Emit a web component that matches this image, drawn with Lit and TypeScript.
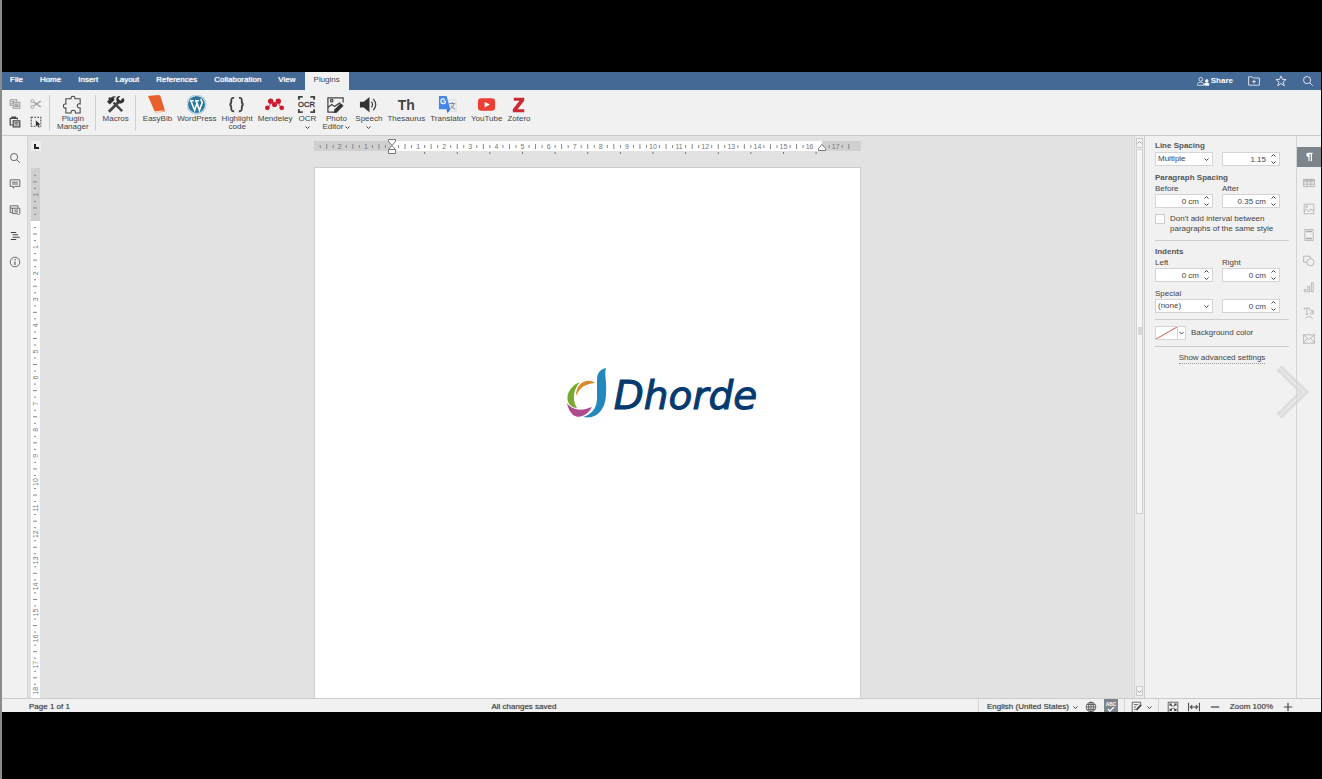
import { LitElement, html, css, svg, nothing, SVGTemplateResult } from "lit";
import { customElement, state } from "lit/decorators.js";
import { classMap } from "lit/directives/class-map.js";

const icon = (size: number, body: SVGTemplateResult, box = 20) =>
  html`<svg class="icon" width=${size} height=${size} viewBox="0 0 ${box} ${box}" aria-hidden="true">${body}</svg>`;

const chevron = html`<svg class="icon chev" width="5" height="5" viewBox="0 0 10 10" aria-hidden="true"><path d="M1 3l4 4 4-4" stroke-width="2"/></svg>`;

const I: Record<string, SVGTemplateResult> = {
  copy: svg`<path d="M2 3h11v3M2 3v9h4M4 6h5M4 9h2M7 7h11v10H7zM9 10h7M9 12h7M9 14h7" stroke-width="1.700"/>`,
  cut: svg`<circle cx="4" cy="5" r="2.500"/><circle cx="4" cy="15" r="2.500"/><path d="M6 6.500L18 15M6 13.500L18 5" stroke-width="2"/>`,
  paste: svg`<path d="M6 15H2V4h12v2M5 4V2h6v2" stroke-width="2"/><path d="M7 8h11v10H7z" fill="#fff" stroke-width="2"/><path d="M9 11h7M9 13h7M9 15h7"/>`,
  select: svg`<path d="M2 2h16v15H2z" stroke-dasharray="3 2" stroke-width="1.700"/><path d="M9 6v13l3-3 2 4 3-1-2-4h4z" fill="#333" stroke="#f1f1f1"/>`,
  puzzle: svg`<path d="M3 4h5.500c-1-3.500 5-3.500 4 0H18v5.500c-4-1.500-4 5 0 4V19h-5c1-4-5.500-4-4.500 0H3v-5.500c-3.500 1-3.500-5 0-4z" stroke-width="1.100"/>`,
  macros: svg`<path d="M3 3l4 4M8 8l9 9" stroke-width="2.500"/><path d="M3 17.500L13 7.500" stroke-width="3"/><path d="M18 3l-3 3-2-2 2-3c-3-.5-5 2-4 5s5 4 7 2 1.500-3 0-5z" fill="#333" stroke="none"/><path d="M1 7l5-5c2-1 3-1 5 0L8 3l1 2-5 5z" fill="#333" stroke="none"/>`,
  easybib: svg`<path d="M1 1l11-1q2 0 2.500 2L19 17l-8 2q-2 0-3-2z" fill="#e9602c" stroke="none"/><path d="M8 17l11-1-8 4z" fill="#fbd6c6" stroke="none"/>`,
  wordpress: svg`<circle cx="10" cy="10" r="10.500" fill="#a3c4d6" stroke="none"/><circle cx="10" cy="10" r="9.300" fill="#2b789d" stroke="#fff" stroke-width=".7"/><path d="M3 6h4M8.500 6h4M4 6l4 10 2.500-7L9.500 6M10.500 8.500L13 16l3-8c0-2-2-2-1-4" stroke="#fff" stroke-width="1.700"/>`,
  braces: svg`<path d="M7.500 3H6.500C4.500 3 4.500 4 4.500 6s0 4-2 4c2 0 2 2 2 4s0 3 2 3h1M12.500 3h1c2 0 2 1 2 3s0 4 2 4c-2 0-2 2-2 4s0 3-2 3h-1" stroke-width="2"/>`,
  mendeley: svg`<g fill="#d0182c" stroke="none"><circle cx="6" cy="6.500" r="2.800"/><circle cx="14" cy="6.500" r="2.800"/><circle cx="10" cy="10" r="2.700"/><circle cx="2.500" cy="13.500" r="2.500"/><circle cx="17.500" cy="13.500" r="2.500"/></g><path d="M3 13Q6 11 6 6l4 4 4-4q0 5 3 7" stroke="#d0182c" stroke-width="1"/>`,
  ocr: svg`<path d="M2 5V2h4M14 2h4v3M2 15v3h4M14 18h4v-3" stroke-width="2"/><text x="10" y="13" text-anchor="middle" font-size="8" fill="#333" stroke="#333" stroke-width=".3">OCR</text>`,
  photo: svg`<path d="M11 18H2V3h16v5M2 13l4-3 3 2 6-4"/><circle cx="6" cy="6" r="1.300"/><path d="M10 17l7-7" stroke-width="4" stroke="#333"/><path d="M8 19l1-4 3 3z" fill="#333" stroke="none"/>`,
  speech: svg`<path d="M1 7h4l6-5v16l-6-5H1z" fill="#333" stroke="none"/><path d="M13 7q2.500 3 0 6M15 4q5 6 0 12"/>`,
  translator: svg`<path d="M8 5h11v12h-8z" fill="#edf0f5" stroke="#ccd3de" stroke-width=".6"/><path d="M1 1h8l4 14H1z" fill="#4686e8" stroke="none"/><path d="M9 15h4l-3 4z" fill="#2f5fc0" stroke="none"/><path d="M8 6.500H5.800M8 6.500c0 4-5 3-5 0s3-3 4-1.500" stroke="#fff" stroke-width="1.200"/><path d="M12 9h6M15 7.500V9M17 9q-1 4-4 5.500M14 11q1 3 4 4" stroke="#6d7682" stroke-width=".9"/>`,
  youtube: svg`<rect x="1" y="3.500" width="18" height="13" rx="3.500" fill="#ef3e32" stroke="none"/><path d="M8 7l5.500 3L8 13z" fill="#fff" stroke="none"/>`,
  zotero: svg`<path d="M5 3h11v3l-7 9h7v3H4v-3l7-9H5z" fill="#cc2936" stroke="none"/>`,
  search: svg`<circle cx="8.500" cy="8.500" r="6"/><path d="M13 13l5 5"/>`,
  comment: svg`<path d="M2 3h16v11h-8l-3 3v-3H2zM5 7h10M5 10h10"/>`,
  chat: svg`<path d="M5 14H2V3h13v3M6 7h12v9l-2 2-2-2H6zM9 10h6M9 13h6M3 7h3"/>`,
  headings: svg`<path d="M3 4h9M6 8h9M6 12h12M3 16h9" stroke-width="1.700"/>`,
  info: svg`<circle cx="10" cy="10" r="8"/><path d="M10 9v6M10 5v2" stroke-width="1.700"/>`,
  share: svg`<circle cx="7" cy="6" r="3.500"/><path d="M1 17v-2c0-4 10-5 11-1v3z"/><circle cx="18" cy="9" r="2.500" fill="#fff"/><path d="M14 17v-3q4-3 8 0v3z" fill="#fff"/>`,
  folder: svg`<path d="M1 3h6l2 2h10v12H1zM10 8v6M7 11h6"/>`,
  star: svg`<path d="M10 1.500l2.500 6h6l-5 4 2 6.500-5.500-4-5.500 4 2-6.500-5-4h6z"/>`,
  para: svg`<path d="M16 3H9C4 3 4 10 9 10v7h2V5h2v12h2V5h1z" fill="#fff" stroke="none"/>`,
  table: svg`<path d="M1 4h18v12H1zM1 8h18M1 12h18M7 4v12M13 4v12"/><path d="M1 5h18" stroke-width="2"/>`,
  image: svg`<path d="M2 2h16v16H2zM2 14l4-3 4 3 3-4 5 3"/><circle cx="6" cy="6" r="1.500"/>`,
  header: svg`<path d="M3 1h14v18H3z"/><path d="M5 4h10M5 16h10" stroke-width="2.500"/>`,
  shape: svg`<path d="M6 12H1V2h11v3"/><circle cx="12.500" cy="12" r="6"/>`,
  chart: svg`<path d="M2 14h3v4H2zM8 9h3v9H8zM14 3h3v15h-3z"/>`,
  textart: svg`<path d="M2 5V2h9v3M6.500 2v10M4 12h5M12 6q5-2 5 1v5M17 8c-6-1-6 5-2 4l2-2M4 19q6-6 12 0"/>`,
  mail: svg`<path d="M1 3h18v14H1zM1 3l9 8 9-8M1 17l6-8M19 17l-6-8"/>`,
  globe: svg`<circle cx="10" cy="10" r="8"/><ellipse cx="10" cy="10" rx="4" ry="8"/><path d="M2 10h16M3 6h14M3 14h14M10 2v16"/>`,
  spell: svg`<text x="10" y="9" text-anchor="middle" font-size="8" font-weight="700" fill="#fff" stroke="none">ABC</text><path d="M5 13l3 4 7-7" stroke="#fff" stroke-width="2"/>`,
  track: svg`<path d="M12 19H2V2h14v3M5 6h7M5 10h4M5 14h3"/><path d="M9 15l8-9" stroke-width="3"/>`,
  fitpage: svg`<path d="M2 2h16v17H2z"/><path d="M5 8V5h3M12 5h3v3M5 13v3h3M12 16h3v-3M5 5l4 4M15 5l-4 4M5 16l4-4M15 16l-4-4" stroke-width="1.700"/>`,
  fitwidth: svg`<path d="M1 3v14M19 3v14M4 10h12M7 7l-3 3 3 3M13 7l3 3-3 3" stroke-width="1.700"/>`,
  minus: svg`<path d="M3 10h14" stroke-width="2"/>`,
  plus: svg`<path d="M3 10h14M10 3v14" stroke-width="2"/>`,
};

const TABS = ["File", "Home", "Insert", "Layout", "References", "Collaboration", "View", "Plugins"];

interface Tool { lines: string[]; icon?: string; glyph?: string; menu?: "inline" | "below"; }
const TOOLS: Tool[] = [
  { lines: ["EasyBib"], icon: "easybib" },
  { lines: ["WordPress"], icon: "wordpress" },
  { lines: ["Highlight", "code"], icon: "braces" },
  { lines: ["Mendeley"], icon: "mendeley" },
  { lines: ["OCR"], icon: "ocr", menu: "below" },
  { lines: ["Photo", "Editor"], icon: "photo", menu: "inline" },
  { lines: ["Speech"], icon: "speech", menu: "below" },
  { lines: ["Thesaurus"], glyph: "Th" },
  { lines: ["Translator"], icon: "translator" },
  { lines: ["YouTube"], icon: "youtube" },
  { lines: ["Zotero"], icon: "zotero" },
];

/* Pixels per centimetre at 100% zoom */
const CM = 26.1;
/* Height of everything above and below the vertical ruler */
const RULER_CHROME = 249;

@customElement("app-root")
export class AppRoot extends LitElement {
  @state() private tab = "Plugins";
  @state() private rulerLength = window.innerHeight - RULER_CHROME;

  private onResize = () => { this.rulerLength = window.innerHeight - RULER_CHROME; };

  connectedCallback() {
    super.connectedCallback();
    window.addEventListener("resize", this.onResize);
  }

  disconnectedCallback() {
    window.removeEventListener("resize", this.onResize);
    super.disconnectedCallback();
  }

  static styles = css`
    :host { display: block; height: 100vh; background: #000; color: #444; font: 8px/8px "Liberation Sans", Arial, sans-serif; }
    * { box-sizing: border-box; }
    button, input, select { font: inherit; color: inherit; text-shadow: inherit; margin: 0; padding: 0; border: 0; background: none; border-radius: 0; }
    button { display: flex; align-items: center; justify-content: center; cursor: pointer; }
    .icon { display: block; flex: none; fill: none; stroke: currentColor; stroke-width: 1.3; }
    .frame { height: 100%; padding: 72px 1px 67px 0; border-left: 2px solid #8c8c8c; position: relative; }
    .app { height: 100%; display: flex; flex-direction: column; background: #f1f1f1; overflow: hidden; }

    .tabs { flex: none; height: 18px; display: flex; gap: 1px; background: #446995; color: #fff; }
    .tab { padding: 0 8px 2px; text-shadow: 0 0 1px #fff; }
    .tab.active { background: #f1f1f1; color: #444; text-shadow: none; padding: 0 9px 2px; }
    .account { margin-left: auto; display: flex; align-items: center; gap: 15px; padding-right: 7px; }
    .share { gap: 1px; font-weight: 700; }

    .toolbar { flex: none; height: 46px; display: flex; border-bottom: 1px solid #cbcbcb; padding: 5px 8px 4px 6px; }
    .clip { display: grid; grid-template-columns: 14px 14px; column-gap: 7px; align-content: space-around; padding-right: 6px; }
    .clip .off { color: #999; }
    .group { display: flex; gap: 5px; border-left: 1px solid #d0d0d0; padding: 0 6px 0 7px; }
    .tool { flex-direction: column; justify-content: flex-start; white-space: nowrap; }
    .pic { height: 20px; display: grid; place-items: center; }
    .glyph { font-size: 14px; line-height: 20px; font-weight: 700; }
    .line { display: flex; align-items: center; gap: 2px; height: 8px; }

    .work { flex: 1; min-height: 0; display: flex; }
    .side { flex: none; width: 26px; display: flex; flex-direction: column; align-items: center; gap: 14px; padding-top: 16px; border-right: 1px solid #d4d4d4; }
    .editor { flex: 1; min-width: 0; display: flex; background: #e2e2e2; }
    .vcol { flex: none; width: 13px; padding: 5px 0 0 3px; overflow: hidden; }
    .corner { display: block; width: 10px; height: 10px; margin-bottom: 17px; background: #ededed; }
    .vr { display: block; }
    .canvas { flex: 1; min-width: 0; display: flex; flex-direction: column; align-items: center; overflow: hidden; }
    .hr { flex: none; display: block; margin-top: 1px; }
    .page { flex: 1; width: 547px; margin-top: 9px; background: #fff; border: 1px solid #ccc; border-bottom: 0; }
    .ruler-text { font-size: 7px; fill: #777; text-anchor: middle; }
    .scroll { flex: none; width: 11px; display: flex; flex-direction: column; padding: 2px 1px; background: #ececec; border-left: 1px solid #d8d8d8; border-right: 1px solid #ccc; }
    .arrow { height: 10px; border: 1px solid #ccc; color: #999; background: #f4f4f4; }
    .track { flex: 1; padding-top: 1px; }
    .thumb { height: 68%; background: #f5f5f5; border: 1px solid #d2d2d2; display: grid; place-items: center; color: #bbb; }
    .flip { transform: rotate(180deg); }

    .panel { flex: none; width: 151px; padding: 6px 7px 0 10px; display: flex; flex-direction: column; }
    .head { font-weight: 700; height: 10px; color: #555; }
    .pair { display: grid; grid-template-columns: 58px 58px; column-gap: 9px; }
    .pair.labels { height: 10px; align-items: center; }
    .field { height: 14px; display: flex; align-items: center; background: #fff; border: 1px solid #d4d4d4; padding: 0 3px 0 2px; }
    .field input, .field select { flex: 1; min-width: 0; width: 10px; height: 12px; outline: 0; appearance: none; }
    .field input { text-align: right; padding-right: 5px; }
    .spin { display: flex; flex-direction: column; gap: 2px; }
    .rule { border: 0; border-top: 1px solid #ccc; width: 100%; margin: 0; }
    .check { display: flex; gap: 5px; line-height: 10px; margin: 6px 0 6px; }
    .check input { appearance: none; width: 10px; height: 10px; background: #fff; border: 1px solid #ccc; }
    .gap-s { margin-top: 6px; }
    .gap-m { margin-top: 7px; }
    .gap-l { margin-top: 8px; }
    .bg { display: flex; align-items: center; gap: 5px; padding: 6px 0; }
    .swatch { border: 1px solid #d4d4d4; background: #fff; height: 14px; }
    .swatch .chev { width: 8px; padding: 0 1px; border-left: 1px solid #d4d4d4; height: 12px; }
    .adv { align-self: center; margin: 6px 0 0; color: #444; text-decoration: none; border-bottom: 1px dotted #999; line-height: 10px; }
    .modes { flex: none; width: 25px; border-left: 1px solid #d4d4d4; padding-top: 11px; display: flex; flex-direction: column; gap: 6px; color: #aaa; }
    .mode { height: 20px; }
    .mode.active { background: #7d858c; color: #fff; }

    .status { flex: none; height: 14px; display: flex; border-top: 1px solid #cbcbcb; overflow: hidden; line-height: 16px; text-shadow: 0 0 1px #888; }
    .status > * { height: 16px; }
    .pages { padding-left: 27px; }
    .saved { flex: 1; text-align: center; }
    .sgroup { display: flex; align-items: center; border-left: 1px solid #d4d4d4; padding: 0 6px 0 8px; gap: 7px; }
    .sgroup.narrow { padding: 0 6px; }
    .sgroup.zoom { gap: 9px; padding-right: 27px; }
    .lang { gap: 4px; line-height: 16px; }
    .spell { background: #7d858c; width: 14px; height: 16px; }

    .brand { position: absolute; inset: 6px 0 0; display: flex; align-items: center; justify-content: center; gap: 7px; pointer-events: none; color: #063a6e; font: oblique 39px/50px "DejaVu Sans", sans-serif; -webkit-text-stroke: 1px #063a6e; }
    .brand span { padding-top: 6px; }
    .brand svg { -webkit-text-stroke: 0; }
    .next { position: absolute; right: 13px; top: 362px; opacity: 0.6; }
  `;

  private hRuler() {
    const zero = 78;
    const end = 508;
    const marks = [];
    for (let q = -11; q <= 70; q++) {
      const x = zero + (q * CM) / 4;
      if (q === 0 || (q > 64 && q < 67)) continue;
      marks.push(q % 4 === 0
        ? svg`<text class="ruler-text" x=${x} y="12">${Math.abs(q / 4)}</text>`
        : svg`<path d="M${x} ${q % 2 === 0 ? 7 : 8}v${q % 2 === 0 ? 5 : 3}" stroke="#888"/>`);
    }
    const stops = [];
    for (let k = 1; k <= 13; k++) stops.push(svg`<path d="M${zero + k * 1.25 * CM} 15v2" stroke="#777"/>`);
    return html`<svg class="hr" width="547" height="21" viewBox="0 0 547 21" aria-label="Horizontal ruler">
      <path d="M0 4h547v10H0z" fill="#d0d0d0"/><path d="M${zero} 4H${end}v10H${zero}z" fill="#fff"/>
      ${marks}${stops}
      <path d="M74.500 2.500h7v2l-3.500 4-3.500-4zM78 8.500l3.500 4v4h-7v-4zM74.500 12.500h7" fill="#fff" stroke="#777"/>
      <path d="M504.500 13.500v-2l3.500-4 3.500 4v2z" fill="#fff" stroke="#777"/>
    </svg>`;
  }

  private vRuler() {
    const zero = 53;
    const length = Math.max(zero, this.rulerLength);
    const marks = [];
    for (let q = -7; zero + (q * CM) / 4 < length - 4; q++) {
      const y = zero + (q * CM) / 4;
      if (q === 0) continue;
      marks.push(q % 4 === 0
        ? svg`<text class="ruler-text" transform="translate(7 ${y}) rotate(-90)">${Math.abs(q / 4)}</text>`
        : svg`<path d="M${q % 2 === 0 ? 2 : 3} ${y}h${q % 2 === 0 ? 4 : 2}" stroke="#888"/>`);
    }
    return html`<svg class="vr" width="9" height=${length} aria-label="Vertical ruler">
      <path d="M0 0h9v${zero}H0z" fill="#cfcfcf"/><path d="M0 ${zero}h9V${length}H0z" fill="#fff"/>${marks}
    </svg>`;
  }

  private spinner(id: string, label: string, value: string) {
    return html`<div class="field"><input id=${id} aria-label=${label} .value=${value} />
      <div class="spin"><button class="flip" aria-label="Increase">${chevron}</button><button aria-label="Decrease">${chevron}</button></div></div>`;
  }

  private dropdown(id: string, label: string, value: string) {
    return html`<div class="field"><select id=${id} aria-label=${label}><option>${value}</option></select>${chevron}</div>`;
  }

  private tool(t: Tool) {
    const last = t.lines.length - 1;
    return html`<button class="tool">
      <span class="pic">${t.glyph ? html`<span class="glyph">${t.glyph}</span>` : icon(20, I[t.icon!], 21)}</span>
      ${t.lines.map((l, i) => html`<span class="line">${l}${t.menu === "inline" && i === last ? chevron : nothing}</span>`)}
      ${t.menu === "below" ? html`<span class="line">${chevron}</span>` : nothing}
    </button>`;
  }

  render() {
    return html`<div class="frame">
      <div class="app">
        <nav class="tabs">
          ${TABS.map((t) => html`<button class=${classMap({ tab: true, active: t === this.tab })} @click=${() => (this.tab = t)}>${t}</button>`)}
          <div class="account">
            <button class="share"><svg class="icon" width="13" height="11" viewBox="0 0 24 20" aria-hidden="true">${I.share}</svg>Share</button>
            <button aria-label="Open file location">${icon(12, I.folder)}</button>
            <button aria-label="Favorite">${icon(12, I.star)}</button>
            <button aria-label="Search">${icon(12, I.search)}</button>
          </div>
        </nav>

        <div class="toolbar">
          <div class="clip">
            <button class="off" aria-label="Copy">${icon(12, I.copy)}</button>
            <button class="off" aria-label="Cut">${icon(12, I.cut)}</button>
            <button aria-label="Paste">${icon(12, I.paste)}</button>
            <button aria-label="Select all">${icon(12, I.select)}</button>
          </div>
          <div class="group">${this.tool({ lines: ["Plugin", "Manager"], icon: "puzzle" })}</div>
          <div class="group">${this.tool({ lines: ["Macros"], icon: "macros" })}</div>
          <div class="group">${TOOLS.map((t) => this.tool(t))}</div>
        </div>

        <div class="work">
          <div class="side">
            ${["search", "comment", "chat", "headings", "info"].map((n) => html`<button aria-label=${n}>${icon(12, I[n])}</button>`)}
          </div>
          <main class="editor">
            <div class="vcol">
              <svg class="corner" viewBox="0 0 10 10" aria-hidden="true"><path d="M4 3v4h4" fill="none" stroke="#222" stroke-width="2"/></svg>
              ${this.vRuler()}
            </div>
            <div class="canvas">${this.hRuler()}<div class="page"></div></div>
            <div class="scroll">
              <button class="arrow flip" aria-label="Scroll up">${chevron}</button>
              <div class="track"><div class="thumb"><svg class="icon" width="4" height="9" viewBox="0 0 4 9" aria-hidden="true"><path d="M0 1h4M0 3h4M0 5h4M0 7h4" stroke-width="1"/></svg></div></div>
              <button class="arrow" aria-label="Scroll down">${chevron}</button>
            </div>
          </main>
          <aside class="panel">
            <div class="head">Line Spacing</div>
            <div class="pair">${this.dropdown("ls", "Line spacing", "Multiple")}${this.spinner("lsv", "Line spacing value", "1.15")}</div>
            <div class="head gap-l">Paragraph Spacing</div>
            <div class="pair labels"><label for="before">Before</label><label for="after">After</label></div>
            <div class="pair">${this.spinner("before", "Before", "0 cm")}${this.spinner("after", "After", "0.35 cm")}</div>
            <label class="check"><input type="checkbox" /><span>Don't add interval between<br />paragraphs of the same style</span></label>
            <hr class="rule" />
            <div class="head gap-m">Indents</div>
            <div class="pair labels"><label for="left">Left</label><label for="right">Right</label></div>
            <div class="pair">${this.spinner("left", "Left", "0 cm")}${this.spinner("right", "Right", "0 cm")}</div>
            <div class="pair labels gap-m"><label for="special">Special</label></div>
            <div class="pair">${this.dropdown("special", "Special", "(none)")}${this.spinner("by", "Special value", "0 cm")}</div>
            <hr class="rule gap-s" />
            <div class="bg">
              <button class="swatch" aria-label="Background color"><svg width="21" height="12" viewBox="0 0 21 12" aria-hidden="true"><path d="M0 12L21 0" stroke="#e25555"/></svg>${chevron}</button>
              <span>Background color</span>
            </div>
            <hr class="rule" />
            <a class="adv" href="#">Show advanced settings</a>
          </aside>
          <div class="modes">
            ${["para", "table", "image", "header", "shape", "chart", "textart", "mail"].map((n, i) => html`<button class=${classMap({ mode: true, active: i === 0 })} aria-label=${n}>${icon(12, I[n])}</button>`)}
          </div>
        </div>

        <footer class="status">
          <span class="pages">Page 1 of 1</span>
          <span class="saved">All changes saved</span>
          <div class="sgroup">
            <button class="lang">English (United States)${chevron}</button>
            <button aria-label="Document language">${icon(12, I.globe)}</button>
            <button class="spell" aria-label="Spell checking">${icon(12, I.spell)}</button>
          </div>
          <div class="sgroup narrow"><button class="lang" aria-label="Track changes">${icon(12, I.track)}${chevron}</button></div>
          <div class="sgroup zoom">
            <button aria-label="Fit to page">${icon(12, I.fitpage)}</button>
            <button aria-label="Fit to width">${icon(12, I.fitwidth)}</button>
            <button aria-label="Zoom out">${icon(12, I.minus)}</button>
            <span>Zoom 100%</span>
            <button aria-label="Zoom in">${icon(12, I.plus)}</button>
          </div>
        </footer>
      </div>
      <div class="brand">
        <svg width="40" height="50" viewBox="0 0 40 50" aria-hidden="true">
          <path d="M39 0C37 7 40 14 39 25C39 40 31 52 16 49C26 46 30 39 30 30V12C30 4 34 1 39 0Z" fill="#2588bd"/>
          <path d="M28 15C22 10 9 13 9 28C13 19 18 16 28 15Z" fill="#d98a2b"/>
          <path d="M13 14C2 18-3 30 3 37C5 39 7 40 10 40C5 32 6 22 13 14Z" fill="#77aa35"/>
          <path d="M0 35C6 43 15 43 25 39C20 48 12 51 6 47Q1 42 0 35Z" fill="#b04a8e"/>
        </svg>
        <span>Dhorde</span>
      </div>
      <button class="next" aria-label="Next"><svg width="34" height="60" viewBox="0 0 34 60" fill="none" aria-hidden="true"><path d="M4 6l25 24L4 54" stroke="#ddd" stroke-width="8"/><path d="M4 6l25 24L4 54" stroke="#c4c4c4" stroke-width="5"/><path d="M4 6l25 24L4 54" stroke="#e0e0e0" stroke-width="3"/></svg></button>
    </div>`;
  }
}
